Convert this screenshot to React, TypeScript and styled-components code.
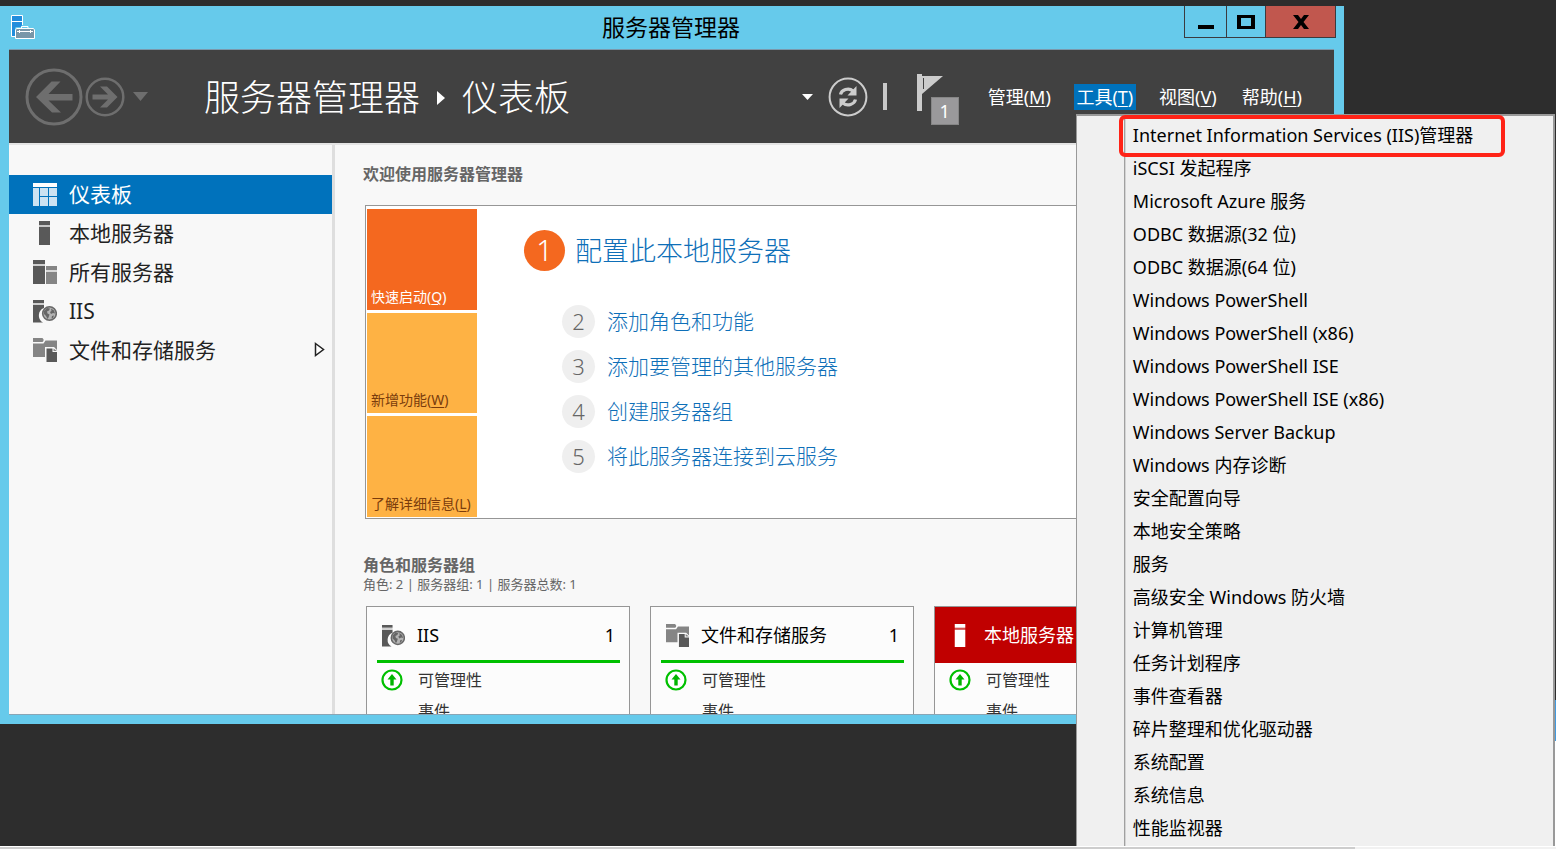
import React from 'react';
import styled, { createGlobalStyle, css } from 'styled-components';

const GlobalStyle = createGlobalStyle`
  *, *::before, *::after { box-sizing: border-box; }
  body {
    margin: 0;
    background: #2d2d2d;
    font-family: "Noto Sans", "Noto Sans CJK SC", sans-serif;
    overflow: hidden;
  }
  button { font: inherit; color: inherit; background: none; border: 0; padding: 0; cursor: pointer; }
  a { color: inherit; text-decoration: none; }
  h1, h2, h3, ul, ol, p { margin: 0; padding: 0; font: inherit; }
  ul, ol { list-style: none; }
  svg { display: block; flex: none; }
  u { text-decoration-thickness: 1px; text-underline-offset: 2px; }
`;

const Desktop = styled.div`
  position: relative;
  height: 100vh;
  padding: 6px 212px 0 0;
  overflow: hidden;
`;

const Window = styled.section`
  display: flex;
  flex-direction: column;
  height: calc(100vh - 131px);
  padding: 0 10px 9px 9px;
  background: #66caeb;
`;

const TitleBar = styled.header`
  display: grid;
  grid-template-columns: 1fr auto 1fr;
  align-items: start;
  flex: none;
  height: 43px;
  margin-right: -10px;
  margin-left: -9px;
  padding: 0 8px 0 11px;
`;

const AppIcon = styled.div`
  padding-top: 9px;
`;

const Title = styled.h1`
  padding: 6px 5px 0 0;
  font-size: 23px;
  line-height: 30px;
  color: #000;
`;

const Controls = styled.div`
  display: flex;
  justify-self: end;
  height: 32px;
  border: 1px solid #3b3b3f;
  border-top: 0;
`;

const Control = styled.button<{ $width: number; $danger?: boolean }>`
  display: flex;
  align-items: center;
  justify-content: center;
  width: ${p => p.$width}px;
  background: ${p => (p.$danger ? '#c1574e' : 'transparent')};
  & + & { border-left: 1px solid #3b3b3f; }
`;

const NavBar = styled.nav`
  display: flex;
  align-items: center;
  flex: none;
  height: 94px;
  padding: 0 30px 0 16px;
  background: #414141;
  border-top: 1px solid #7b98ab;
  color: #fff;
`;

const History = styled.div`
  display: flex;
  align-items: center;
  gap: 2px;
  margin-right: 56px;
`;

const HistoryMenu = styled.button`
  padding-left: 6px;
`;

const Breadcrumb = styled.div`
  display: flex;
  align-items: center;
  flex: 1;
  gap: 17px;
  padding-top: 2px;
  font-size: 36px;
  line-height: 48px;
  font-weight: 300;
  white-space: nowrap;
`;

const Tools = styled.div`
  display: flex;
  align-items: center;
  gap: 15px;
`;

const Divider = styled.span`
  width: 4px;
  height: 27px;
  background: #c8c8c8;
`;

const FlagButton = styled.button`
  position: relative;
  display: flex;
  align-items: flex-start;
  width: 42px;
  height: 51px;
  margin: 6px 0 0 15px;
`;

const FlagCount = styled.span`
  position: absolute;
  right: 0;
  bottom: 0;
  width: 28px;
  height: 28px;
  border: 1px solid #868686;
  background: #9a999b;
  font-size: 18px;
  line-height: 26px;
  text-align: center;
`;

const MenuBar = styled.ul`
  display: flex;
  gap: 21px;
  margin-left: 12px;
`;

const MenuHolder = styled.li`
  position: relative;
`;

const MenuButton = styled.button<{ $open?: boolean }>`
  min-width: 62px;
  height: 26px;
  padding: 0 2px;
  font-size: 18px;
  line-height: 24px;
  white-space: nowrap;
  background: ${p => (p.$open ? '#0072bc' : 'transparent')};
`;

const Menu = styled.ul`
  position: absolute;
  z-index: 5;
  top: 30px;
  left: 2px;
  width: 479px;
  padding: 3px 0;
  border: 1px solid #999;
  border-width: 2px 2px 0 1px;
  background: linear-gradient(90deg, #f0f0f0 47px, #a0a0a0 47px, #a0a0a0 48px, #d4d4d4 48px, #d4d4d4 49px, #f0f0f0 49px);
`;

const MenuItem = styled.li<{ $marked?: boolean }>`
  position: relative;
  height: 33px;
  ${p => p.$marked && css`
    &::after {
      content: '';
      position: absolute;
      top: -4px;
      left: 42px;
      width: 386px;
      height: 42px;
      border: 4px solid #ff2317;
      border-radius: 6px;
      pointer-events: none;
    }
  `}
`;

const MenuCommand = styled.button`
  width: 100%;
  padding-left: 56px;
  font-size: 18px;
  line-height: 32px;
  color: #000;
  text-align: left;
  white-space: nowrap;
`;

const Body = styled.div`
  display: flex;
  flex: 1;
  min-height: 0;
  border-top: 2px solid #e4e4e4;
  border-bottom: 1px solid #8aa5b5;
  background: #f8f8f8;
`;

const Sidebar = styled.ul`
  flex: none;
  width: 326px;
  padding-top: 30px;
  border-right: 3px solid #dedede;
`;

const SideLink = styled.a<{ $active?: boolean }>`
  display: flex;
  align-items: center;
  gap: 12px;
  height: 39px;
  padding: 0 7px 2px 24px;
  font-size: 21px;
  line-height: 36px;
  color: ${p => (p.$active ? '#fff' : '#222')};
  background: ${p => (p.$active ? '#0072bc' : 'transparent')};
  & > span { flex: 1; }
`;

const Main = styled.main`
  flex: 1;
  min-width: 0;
  padding: 17px 20px 0 28px;
  overflow: hidden;
`;

const Heading = styled.h2`
  font-size: 16px;
  line-height: 24px;
  font-weight: 600;
  color: #666;
`;

const Summary = styled.p`
  font-size: 13px;
  line-height: 14px;
  color: #666;
  white-space: pre;
`;

const Welcome = styled.section`
  display: flex;
  margin: 19px 0 34px 2px;
  padding: 3px 1px 1px;
  border: 1px solid #969696;
  background: #fff;
`;

const Tiles = styled.div`
  display: grid;
  grid-auto-rows: 1fr;
  flex: none;
  gap: 3px;
  width: 110px;
  height: 308px;
`;

const Tile = styled.button<{ $primary?: boolean }>`
  display: flex;
  align-items: flex-end;
  padding: 0 4px 3px;
  font-size: 14px;
  line-height: 20px;
  white-space: nowrap;
  color: ${p => (p.$primary ? '#fff' : '#7a3c0c')};
  background: ${p => (p.$primary ? '#f4681f' : '#feb244')};
`;

const Steps = styled.ol`
  display: flex;
  flex-direction: column;
  gap: 12px;
  padding: 21px 0 0 47px;
  font-weight: 300;
  color: #0e6fb8;
`;

const Step = styled.li<{ $first?: boolean }>`
  display: flex;
  align-items: center;
  gap: ${p => (p.$first ? 10 : 12)}px;
  margin: ${p => (p.$first ? '0 0 22px' : '0 0 0 38px')};
  font-size: ${p => (p.$first ? 27 : 21)}px;
  line-height: 33px;
  white-space: nowrap;
`;

const StepNumber = styled.span<{ $first?: boolean }>`
  width: ${p => (p.$first ? 41 : 33)}px;
  height: ${p => (p.$first ? 41 : 33)}px;
  border-radius: 50%;
  font-size: ${p => (p.$first ? 29 : 22)}px;
  line-height: ${p => (p.$first ? 40 : 32)}px;
  text-align: center;
  color: ${p => (p.$first ? '#fff' : '#666')};
  background: ${p => (p.$first ? '#f4681f' : '#efefef')};
`;

const Cards = styled.div`
  display: grid;
  grid-template-columns: repeat(auto-fill, 264px);
  gap: 20px;
  margin: 15px 0 0 3px;
`;

const Card = styled.article`
  min-height: 240px;
  border: 1px solid #969696;
  background: #fcfcfc;
`;

const CardHead = styled.h3<{ $alert?: boolean }>`
  display: flex;
  align-items: center;
  gap: 12px;
  height: 56px;
  margin: ${p => (p.$alert ? '0' : '0 9px 0 10px')};
  padding: ${p => (p.$alert ? '3px 14px 0' : '3px 5px 0')};
  border-bottom: 3px solid ${p => (p.$alert ? '#c00000' : '#00c000')};
  background: ${p => (p.$alert ? '#c00000' : 'transparent')};
  color: ${p => (p.$alert ? '#fff' : '#000')};
  font-size: 18px;
  line-height: 26px;
  white-space: nowrap;
  & > span { flex: 1; }
`;

const CardRow = styled.div`
  display: flex;
  align-items: center;
  gap: 15px;
  height: 31px;
  padding: 2px 14px 0;
  font-size: 16px;
  line-height: 24px;
  color: #333;
`;

const Blank = styled.span`
  width: 22px;
`;

const NeighbourWindow = styled.div`
  position: absolute;
  top: 700px;
  right: 0;
  bottom: 3px;
  width: 2px;
  border-top: 41px solid #429ade;
  background: #fff;
`;

const ScrollStrip = styled.div`
  position: absolute;
  z-index: 6;
  right: 0;
  bottom: 0;
  left: 0;
  height: 3px;
  padding-right: 201px;
  border-top: 1px solid #fff;
  background: #f1f1f1;
  &::before {
    content: '';
    display: block;
    height: 2px;
    background: #cdcdcd;
  }
`;

type IconProps = { size?: number };

const ManagerLogo = () => (
  <svg width="24" height="25" viewBox="0 0 24 25">
    <path d="M.5.5h11v21H.5z" fill="#218ddc" stroke="#fff" />
    <path d="M0 6.500h12" stroke="#fff" />
    <path d="M4 13l1-1h5l1-2h6l1 2h5l1 1v12H4z" fill="#66caeb" />
    <path d="M10.500 13v-1.500h6.500V13" fill="none" stroke="#fff" />
    <path d="M5.500 13.500h17l1 1.500v8.500h-19V15z" fill="#7896a8" stroke="#fff" />
    <path d="M6 16.500h16M8.500 15v3M19.500 15v3" stroke="#fff" />
  </svg>
);

const DashboardIcon = () => (
  <svg width="24" height="24" viewBox="0 0 24 24">
    <path d="M0 1h24v4H0z" fill="#fff" />
    <path d="M0 6h6v18H0zM7 6h8v8H7zM16 6h8v8h-8zM7 15h8v9H7zM16 15h8v9h-8z" fill="#cce3f2" />
  </svg>
);

const ServerIcon = ({ size = 24, color = '#595959' }: IconProps & { color?: string }) => (
  <svg width={size} height={size} viewBox="0 0 24 24" fill={color}>
    <path d="M6 0h11v4H6zM6 6h11v18H6z" />
    <path d="M6 4h11v2H6z" opacity=".3" />
  </svg>
);

const ServersIcon = () => (
  <svg width="24" height="24" viewBox="0 0 24 24">
    <path d="M0 0h12v4H0zM0 6h12v18H0z" fill="#595959" />
    <path d="M0 4h12v2H0z" fill="#cfcfcf" />
    <path d="M13 6h11v4H13zM13 12h11v12H13z" fill="#858585" />
    <path d="M13 10h11v2H13z" fill="#d8d8d8" />
  </svg>
);

const WebServerIcon = ({ size = 24 }: IconProps) => (
  <svg width={size} height={size} viewBox="0 0 24 24">
    <path d="M0 1h11v3H0zM0 6h11v3a8 8 0 0 0-1 14.500H0z" fill="#595959" />
    <path d="M0 4h11v2H0z" fill="#cfcfcf" />
    <circle cx="16.500" cy="14.500" r="6.800" fill="#b4b4b4" stroke="#686868" strokeWidth="1.600" />
    <path d="M11 12l3-3 3 .500-1 2-2 1 .500 2 2 1-1 3-1 1.500-1.500-3-2-2zM18 9.500l3 2 1 3-2-.500-2 1-1-2 1.500-1zM19 17l2-.500-1 2.500-1.500.500z" fill="#666" />
  </svg>
);

const StorageIcon = ({ size = 24 }: IconProps) => (
  <svg width={size} height={size} viewBox="0 0 24 24">
    <path d="M0 0h9.500l1 1.500V3L9.500 4H0z" fill="#858585" />
    <path d="M0 5.500h10.500l2-3H24V12l-3-3H12v10H0z" fill="#858585" />
    <path d="M13.500 10.500h6V14H24v10H13.500z" fill="#595959" />
    <path d="M20.500 10.500L24 13h-3.500z" fill="#858585" />
  </svg>
);

const OnlineIcon = () => (
  <svg width="22" height="22" viewBox="0 0 22 22">
    <circle cx="11" cy="11" r="9.500" fill="#fff" stroke="#00c000" strokeWidth="2.200" />
    <path d="M11 5l4.500 5.500H12.700v6H9.300v-6H6.500z" fill="#00b400" />
  </svg>
);

const BackIcon = () => (
  <svg width="58" height="58" viewBox="0 0 58 58">
    <circle cx="29" cy="29" r="27" fill="none" stroke="#6e6e6e" strokeWidth="3" />
    <path d="M26.500 13.500h9L23.500 26h24v6.500h-24L36 44.500h-9L11 29z" fill="#6e6e6e" />
  </svg>
);

const ForwardIcon = () => (
  <svg width="40" height="40" viewBox="0 0 40 40">
    <circle cx="20" cy="20" r="18.300" fill="none" stroke="#6e6e6e" strokeWidth="2.500" />
    <path d="M15 9.500h7L32.500 20 22 30.500h-7L23 22.500H7.500v-5H23z" fill="#6e6e6e" />
  </svg>
);

const RefreshIcon = () => (
  <svg width="40" height="40" viewBox="0 0 40 40">
    <circle cx="20" cy="20" r="18.400" fill="none" stroke="#ccc" strokeWidth="2" />
    <path d="M12.500 17.500c1-4.500 8-7.500 12.500-3.500M27.500 22.500c-1 4.500-8 7.500-12.500 3.500" fill="none" stroke="#ccc" strokeWidth="3.200" />
    <path d="M28.500 9v9.500h-9zM11.500 31v-9.500h9z" fill="#ccc" />
  </svg>
);

const FlagIcon = () => (
  <svg width="26" height="37" viewBox="0 0 26 37">
    <path d="M0 0h5v37H0zM5 2h21L5 20z" fill="#ccc" />
    <path d="M6.500 4v11" stroke="#414141" />
  </svg>
);

const Caret = ({ w, h, color }: { w: number; h: number; color: string }) => (
  <svg width={w} height={h} viewBox="0 0 10 6" preserveAspectRatio="none">
    <path d="M0 0h10L5 6z" fill={color} />
  </svg>
);

const menus: [string, string][] = [['管理', 'M'], ['工具', 'T'], ['视图', 'V'], ['帮助', 'H']];

const commands = [
  'Internet Information Services (IIS)管理器',
  'iSCSI 发起程序',
  'Microsoft Azure 服务',
  'ODBC 数据源(32 位)',
  'ODBC 数据源(64 位)',
  'Windows PowerShell',
  'Windows PowerShell (x86)',
  'Windows PowerShell ISE',
  'Windows PowerShell ISE (x86)',
  'Windows Server Backup',
  'Windows 内存诊断',
  '安全配置向导',
  '本地安全策略',
  '服务',
  '高级安全 Windows 防火墙',
  '计算机管理',
  '任务计划程序',
  '事件查看器',
  '碎片整理和优化驱动器',
  '系统配置',
  '系统信息',
  '性能监视器',
];

const pages = [
  { label: '仪表板', icon: <DashboardIcon /> },
  { label: '本地服务器', icon: <ServerIcon /> },
  { label: '所有服务器', icon: <ServersIcon /> },
  { label: 'IIS', icon: <WebServerIcon /> },
  { label: '文件和存储服务', icon: <StorageIcon />, expandable: true },
];

const tiles: [string, string][] = [['快速启动', 'Q'], ['新增功能', 'W'], ['了解详细信息', 'L']];

const steps = ['配置此本地服务器', '添加角色和功能', '添加要管理的其他服务器', '创建服务器组', '将此服务器连接到云服务'];

const groups = [
  { name: 'IIS', icon: <WebServerIcon size={23} />, count: 1 },
  { name: '文件和存储服务', icon: <StorageIcon size={23} />, count: 1 },
  { name: '本地服务器', icon: <ServerIcon size={23} color="#fff" />, alert: true },
];

export default function App() {
  return (
    <Desktop>
      <GlobalStyle />
      <NeighbourWindow />
      <Window>
        <TitleBar>
          <AppIcon><ManagerLogo /></AppIcon>
          <Title>服务器管理器</Title>
          <Controls>
            <Control $width={41} aria-label="最小化">
              <svg width="16" height="14"><path d="M0 10h16v4H0z" /></svg>
            </Control>
            <Control $width={39} aria-label="最大化">
              <svg width="18" height="14"><path d="M0 0h18v14H0zM4 3v8h10V3z" fillRule="evenodd" /></svg>
            </Control>
            <Control $width={70} $danger aria-label="关闭">
              <svg width="16" height="14"><path d="M0 0h5l3 4 3-4h5l-5.500 7L16 14h-5l-3-4-3 4H0l5.500-7z" /></svg>
            </Control>
          </Controls>
        </TitleBar>
        <NavBar>
          <History>
            <button aria-label="后退"><BackIcon /></button>
            <button aria-label="前进"><ForwardIcon /></button>
            <HistoryMenu aria-label="历史记录"><Caret w={15} h={9} color="#6e6e6e" /></HistoryMenu>
          </History>
          <Breadcrumb>
            <span>服务器管理器</span>
            <svg width="8" height="14" viewBox="0 0 8 14"><path d="M0 0l8 7-8 7z" fill="#fff" /></svg>
            <span>仪表板</span>
          </Breadcrumb>
          <Tools>
            <button aria-label="更多"><Caret w={11} h={6} color="#fff" /></button>
            <button aria-label="刷新"><RefreshIcon /></button>
            <Divider />
            <FlagButton aria-label="通知">
              <FlagIcon />
              <FlagCount>1</FlagCount>
            </FlagButton>
            <MenuBar>
              {menus.map(([label, key]) => (
                <MenuHolder key={key}>
                  <MenuButton $open={key === 'T'}>{label}(<u>{key}</u>)</MenuButton>
                  {key === 'T' && (
                    <Menu>
                      {commands.map((name, i) => (
                        <MenuItem key={name} $marked={i === 0}>
                          <MenuCommand>{name}</MenuCommand>
                        </MenuItem>
                      ))}
                    </Menu>
                  )}
                </MenuHolder>
              ))}
            </MenuBar>
          </Tools>
        </NavBar>
        <Body>
          <Sidebar>
            {pages.map((page, i) => (
              <li key={page.label}>
                <SideLink href="#" $active={i === 0}>
                  {page.icon}
                  <span>{page.label}</span>
                  {page.expandable && (
                    <svg width="11" height="15" viewBox="0 0 11 15">
                      <path d="M1.500 1.500l8 6-8 6z" fill="#fff" stroke="#222" strokeWidth="1.500" />
                    </svg>
                  )}
                </SideLink>
              </li>
            ))}
          </Sidebar>
          <Main>
            <Heading>欢迎使用服务器管理器</Heading>
            <Welcome>
              <Tiles>
                {tiles.map(([label, key], i) => (
                  <Tile key={key} $primary={i === 0}><span>{label}(<u>{key}</u>)</span></Tile>
                ))}
              </Tiles>
              <Steps>
                {steps.map((label, i) => (
                  <Step key={label} $first={i === 0}>
                    <StepNumber $first={i === 0}>{i + 1}</StepNumber>
                    <a href="#">{label}</a>
                  </Step>
                ))}
              </Steps>
            </Welcome>
            <Heading>角色和服务器组</Heading>
            <Summary>角色: 2 | 服务器组: 1 | 服务器总数: 1</Summary>
            <Cards>
              {groups.map(group => (
                <Card key={group.name}>
                  <CardHead $alert={group.alert}>
                    {group.icon}
                    <span>{group.name}</span>
                    {group.count}
                  </CardHead>
                  <CardRow><OnlineIcon />可管理性</CardRow>
                  <CardRow><Blank />事件</CardRow>
                </Card>
              ))}
            </Cards>
          </Main>
        </Body>
      </Window>
      <ScrollStrip />
    </Desktop>
  );
}
